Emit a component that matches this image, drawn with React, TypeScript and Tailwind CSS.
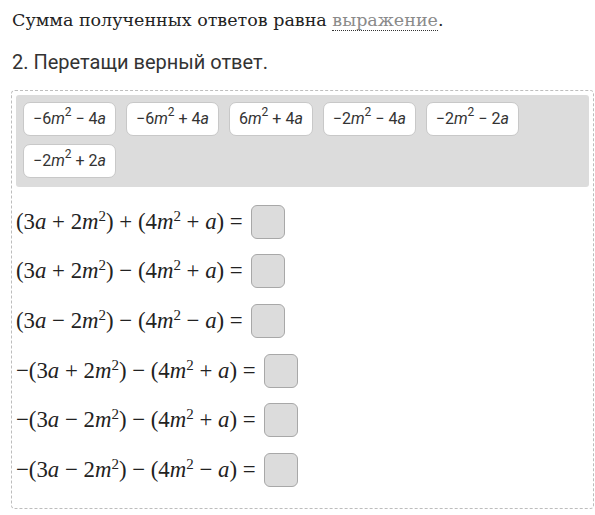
import React from 'react';

const chips: [string, string, string, string][] = [
  ['−6', 'm', '− 4', 'a'],
  ['−6', 'm', '+ 4', 'a'],
  ['6', 'm', '+ 4', 'a'],
  ['−2', 'm', '− 4', 'a'],
  ['−2', 'm', '− 2', 'a'],
  ['−2', 'm', '+ 2', 'a'],
];

// [leading minus, first sign, second sign, third sign]
const rows: [string, string, string, string][] = [
  ['', '+', '+', '+'],
  ['', '+', '−', '+'],
  ['', '−', '−', '−'],
  ['−', '+', '−', '+'],
  ['−', '−', '−', '+'],
  ['−', '−', '−', '−'],
];

const Chip = ({ c }: { c: [string, string, string, string] }) => (
  <div className="h-[34px] px-[9px] flex items-center bg-white border border-[#c8c8c8] rounded-[7px] text-[16px] text-[#333] font-['Roboto',sans-serif] whitespace-nowrap">
    {c[0]}
    <i>{c[1]}</i>
    <sup className="text-[12px] -top-[7px]">2</sup>
    &nbsp;{c[2]}
    <i>{c[3]}</i>
  </div>
);

const Equation = ({ r }: { r: [string, string, string, string] }) => (
  <div className="flex items-center h-[49.6px]">
    <span className="font-['Liberation_Serif',serif] text-[22.8px] text-[#222] whitespace-nowrap leading-[30px]">
      {r[0]}(3<i>a</i> {r[1]} 2<i>m</i>
      <sup className="text-[15px] -top-[8px]">2</sup>) {r[2]} (4<i>m</i>
      <sup className="text-[15px] -top-[8px]">2</sup> {r[3]} <i>a</i>) =
    </span>
    <div className="ml-[8px] w-[34px] h-[34px] bg-[#dcdcdc] border border-[#a8a8a8] rounded-[6px]" />
  </div>
);

export default function App() {
  return (
    <div className="w-[595px] h-[515px] bg-white pl-[11px] pt-[6px]">
      <p className="pl-[1px] font-['DejaVu_Serif',serif] text-[17.5px] text-[#222] leading-[28px]">
        Сумма полученных ответов равна{' '}
        <span className="text-[#8a8a8a] border-b border-dotted border-[#333]">выражение</span>.
      </p>
      <p className="pl-[1px] mt-[13px] font-['Roboto',sans-serif] text-[20px] text-[#333] leading-[30px]">
        2. Перетащи верный ответ.
      </p>
      <div className="mt-[13px] w-[583px] border border-dashed border-[#bdbdbd] rounded-[4px] p-[4px] pb-[13px]">
        <div className="bg-[#dcdcdc] rounded-[3px] px-[7px] pt-[7px] pb-[9px] flex flex-wrap gap-x-[10px] gap-y-[8px]">
          {chips.map((c, i) => (
            <Chip key={i} c={c} />
          ))}
        </div>
        <div className="pt-[10px]">
          {rows.map((r, i) => (
            <Equation key={i} r={r} />
          ))}
        </div>
      </div>
    </div>
  );
}
